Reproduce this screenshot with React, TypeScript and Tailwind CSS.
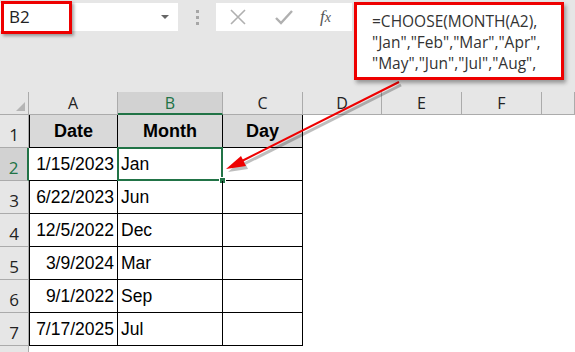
const cols = ["A", "B", "C", "D", "E", "F", ""];

const rows = [
  { date: "1/15/2023", month: "Jan" },
  { date: "6/22/2023", month: "Jun" },
  { date: "12/5/2022", month: "Dec" },
  { date: "3/9/2024", month: "Mar" },
  { date: "9/1/2022", month: "Sep" },
  { date: "7/17/2025", month: "Jul" },
];

const uiFont = { fontFamily: '"Open Sans", "Noto Sans", sans-serif' };
const cellFont = { fontFamily: '"Liberation Sans", Arial, sans-serif' };

const TopBar = () => (
  <div className="flex h-[92px] items-start bg-[#e6e6e6]">
    {/* name box */}
    <div className="relative mt-[3px] flex h-[28px] w-[178px] items-center bg-white pl-[9px]">
      <span className="text-[17px] text-[#222]" style={uiFont}>
        B2
      </span>
      <div className="ml-auto mr-[9px] h-0 w-0 border-x-[4px] border-t-[4px] border-x-transparent border-t-[#666]" />
      <div className="absolute left-[1px] top-[-2px] h-[33px] w-[71px] border-[3px] border-[#ee0000] shadow-[2px_2px_3px_rgba(0,0,0,0.35)]" />
    </div>
    {/* dots */}
    <div className="mt-[10px] flex w-[38px] flex-col items-center gap-[3px]">
      <div className="h-[3px] w-[3px] bg-[#a6a6a6]" />
      <div className="h-[3px] w-[3px] bg-[#a6a6a6]" />
      <div className="h-[3px] w-[3px] bg-[#a6a6a6]" />
    </div>
    {/* tools */}
    <div className="mt-[3px] flex h-[28px] w-[136px] items-center bg-white">
      <svg width="16" height="16" viewBox="0 0 16 16" className="ml-[14px]">
        <path d="M1 1 L15 15 M15 1 L1 15" stroke="#b0b0b0" strokeWidth="1.6" fill="none" />
      </svg>
      <svg width="18" height="16" viewBox="0 0 18 16" className="ml-[29px]">
        <path d="M1 9 L6 14 L17 2" stroke="#b0b0b0" strokeWidth="2.4" fill="none" />
      </svg>
      <span
        className="ml-[27px] text-[17px] italic text-[#555]"
        style={{ fontFamily: '"Liberation Serif", "Times New Roman", serif' }}
      >
        f<span className="text-[14px]">x</span>
      </span>
    </div>
    {/* formula box */}
    <div className="relative z-10 ml-[2px] mt-[2px] h-[78px] w-[210px] border-[3px] border-[#ee0000] bg-white pl-[15px] pt-[6px] shadow-[2px_3px_4px_rgba(0,0,0,0.35)]">
      <div className="text-[15.5px] leading-[21px] text-[#333]" style={uiFont}>
        <div>=CHOOSE(MONTH(A2),</div>
        <div>"Jan","Feb","Mar","Apr",</div>
        <div>"May","Jun","Jul","Aug",</div>
      </div>
    </div>
  </div>
);

const Sheet = () => {
  return (
    <div className="grid grid-cols-[29px_89px_105px_80px_79px_80px_80px_1fr] grid-rows-[23px_repeat(7,33px)_1fr] bg-white">
      {/* corner */}
      <div className="relative border-b border-r border-[#ababab] bg-[#e6e6e6]">
        <div className="absolute bottom-[3px] right-[3px] h-0 w-0 border-b-[9px] border-l-[9px] border-b-[#b5b5b5] border-l-transparent" />
      </div>
      {cols.map((c, i) => (
        <div
          key={i}
          className={
            c === "B"
              ? "flex items-center justify-center border-b-2 border-r border-b-[#217346] border-r-[#ababab] bg-[#d2d2d2] text-[16px] text-[#217346]"
              : "flex items-center justify-center border-b border-r border-[#ababab] bg-[#e6e6e6] text-[16px] text-[#222]"
          }
          style={uiFont}
        >
          {c}
        </div>
      ))}

      {/* row 1 */}
      <div className="flex items-end justify-center border-b border-r border-[#ababab] bg-[#e6e6e6] text-[17px] text-[#222]" style={uiFont}>
        1
      </div>
      {["Date", "Month", "Day"].map((h, i) => (
        <div
          key={h}
          className={
            "flex items-center justify-center border-b border-r border-black bg-[#d9d9d9] text-[18px] font-bold text-black " +
            (i === 0 ? "border-l" : "")
          }
          style={cellFont}
        >
          {h}
        </div>
      ))}
      <div className="col-span-4" />

      {rows.map((r, i) => {
        const sel = i === 0;
        return (
          <div key={r.date} className="contents">
            <div
              className={
                sel
                  ? "flex items-end justify-center border-b border-r-2 border-b-[#ababab] border-r-[#217346] bg-[#d2d2d2] text-[17px] text-[#217346]"
                  : "flex items-end justify-center border-b border-r border-[#ababab] bg-[#e6e6e6] text-[17px] text-[#222]"
              }
              style={uiFont}
            >
              {i + 2}
            </div>
            <div
              className={
                "flex items-center justify-end border-b border-r border-black pr-[3px] text-[17.5px] text-black " +
                (sel ? "border-l-0" : "border-l")
              }
              style={cellFont}
            >
              {r.date}
            </div>
            <div className="relative flex items-center border-b border-r border-black pl-[3px] text-[17.5px] text-black" style={cellFont}>
              {r.month}
              {sel && (
                <>
                  <div className="absolute -left-[1px] -top-[1px] h-[34px] w-[106px] border-2 border-[#217346]" />
                  <div className="absolute -bottom-[4px] -right-[4px] h-[7px] w-[7px] border border-white bg-[#217346]" />
                </>
              )}
            </div>
            <div className="border-b border-r border-black" />
            <div className="col-span-4" />
          </div>
        );
      })}

      {/* row 8 partial */}
      <div className="h-[6px] border-r border-[#ababab] bg-[#e6e6e6]" />
      <div className="col-span-7" />
    </div>
  );
};

const Arrow = () => (
  <svg className="pointer-events-none absolute left-0 top-0" width="575" height="352">
    <g opacity="0.25" transform="translate(2,3)">
      <line x1="399" y1="82" x2="236" y2="164" stroke="#000" strokeWidth="3" />
      <polygon points="226,169 241,156 246,166" fill="#000" />
    </g>
    <line x1="399" y1="82" x2="236" y2="164" stroke="#ee0000" strokeWidth="2" />
    <polygon points="226,169 241,156 246,166" fill="#ee0000" />
  </svg>
);

export default function App() {
  return (
    <div className="relative h-[352px] w-[575px] overflow-hidden bg-white">
      <TopBar />
      <Sheet />
      <Arrow />
    </div>
  );
}
